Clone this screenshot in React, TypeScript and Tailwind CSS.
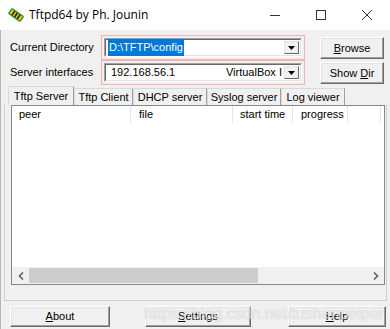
import { ReactNode } from 'react'

const font = { fontFamily: '"Liberation Sans", Arial, sans-serif' }

// classic raised 3D button
const Btn = ({ children, className }: { children: ReactNode; className?: string }) => (
    <div
        className={`flex items-center justify-center border border-t-white border-l-white border-r-[#696969] border-b-[#696969] bg-[#f0f0f0] shadow-[inset_-1px_-1px_0_#a0a0a0,inset_1px_1px_0_#e3e3e3] text-[11px] text-black ${className ?? ''}`}
    >
        {children}
    </div>
)

const DropArrow = () => (
    <div className="flex h-full w-[15px] items-center justify-center border border-t-[#e3e3e3] border-l-[#e3e3e3] border-r-[#696969] border-b-[#696969] bg-[#f0f0f0]">
        <svg width="7" height="4" viewBox="0 0 7 4">
            <path d="M0 0h7L3.5 4z" fill="#000" />
        </svg>
    </div>
)

const Combo = ({ children }: { children: ReactNode }) => (
    <div className="h-[25px] w-[204px] border border-[#f3b3b3] p-[2px]">
        <div className="flex h-full items-center border border-t-[#a0a0a0] border-l-[#a0a0a0] border-r-white border-b-white bg-white">
            <div className="flex h-full flex-1 items-center border border-t-[#696969] border-l-[#696969] border-r-[#e3e3e3] border-b-[#e3e3e3] pl-[1px] pr-[1px] py-[1px]">
                <div className="flex h-full flex-1 items-center pl-[1px] text-[11px]">{children}</div>
                <DropArrow />
            </div>
        </div>
    </div>
)

const TabLabel = ({ label, active, w }: { label: string; active?: boolean; w: string }) => (
    <div
        className={`flex items-center justify-center border border-b-0 border-t-[#d9d9d9] border-l-[#d9d9d9] border-r-[#a0a0a0] bg-[#f0f0f0] text-[11px] ${w} ${
            active ? 'h-[19px]' : 'h-[17px]'
        }`}
    >
        {label}
    </div>
)

const Header = ({ label, w }: { label: string; w: string }) => (
    <div className={`flex h-[17px] items-center border-r border-[#e5e5e5] text-[11px] ${w}`}>{label}</div>
)

export default function App() {
    return (
        <div className="relative flex h-[329px] w-[390px] flex-col overflow-hidden bg-[#f0f0f0] text-black" style={font}>
            {/* title bar */}
            <div className="flex h-[30px] items-center bg-white">
                <svg className="ml-[8px]" width="16" height="14" viewBox="0 0 16 14">
                    <g transform="rotate(35 8 7)">
                        <rect x="1" y="4" width="14" height="6" rx="1" fill="#e8c21a" stroke="#2f9a2f" strokeWidth="1.4" />
                        <rect x="4" y="4.5" width="1.6" height="5" fill="#222" />
                        <rect x="7.2" y="4.5" width="1.6" height="5" fill="#222" />
                        <rect x="10.4" y="4.5" width="1.6" height="5" fill="#222" />
                    </g>
                </svg>
                <span className="ml-[5px] text-[12px]" style={{ fontFamily: '"Open Sans", "Liberation Sans", sans-serif' }}>
                    Tftpd64 by Ph. Jounin
                </span>
                <div className="ml-auto flex h-full items-center">
                    <div className="flex h-full w-[46px] items-center justify-center">
                        <div className="h-px w-[10px] bg-[#333]" />
                    </div>
                    <div className="flex h-full w-[46px] items-center justify-center">
                        <div className="h-[10px] w-[10px] border border-[#333]" />
                    </div>
                    <div className="flex h-full w-[46px] items-center justify-center">
                        <svg width="10" height="10" viewBox="0 0 10 10">
                            <path d="M0 0L10 10M10 0L0 10" stroke="#333" strokeWidth="1" />
                        </svg>
                    </div>
                </div>
            </div>

            {/* body */}
            <div className="flex flex-1 flex-col border-l border-[#b5b5b5] pt-[5px]">
                <div className="flex">
                    <div className="flex w-[100px] flex-col">
                        <div className="flex h-[25px] items-center pl-[9px] text-[11px]">Current Directory</div>
                        <div className="flex h-[25px] items-center pl-[9px] text-[11px]">Server interfaces</div>
                    </div>
                    <div className="flex flex-col">
                        <Combo>
                            <span className="bg-[#0078d7] px-[1px] text-white">D:\TFTP\config</span>
                        </Combo>
                        <Combo>
                            <span className="ml-[3px]">192.168.56.1</span>
                            <span className="ml-auto mr-[2px]">VirtualBox I</span>
                        </Combo>
                    </div>
                    <div className="ml-[15px] flex flex-col pt-[2px]">
                        <Btn className="h-[22px] w-[64px]">
                            <span><u>B</u>rowse</span>
                        </Btn>
                        <Btn className="mt-[3px] h-[22px] w-[64px]">
                            <span>Show <u>D</u>ir</span>
                        </Btn>
                    </div>
                </div>

                {/* tabs */}
                <div className="mt-[1px] flex items-end pl-[7px]">
                    <TabLabel label="Tftp Server" active w="w-[66px]" />
                    <TabLabel label="Tftp Client" w="w-[59px]" />
                    <TabLabel label="DHCP server" w="w-[74px]" />
                    <TabLabel label="Syslog server" w="w-[74px]" />
                    <TabLabel label="Log viewer" w="w-[64px]" />
                </div>

                {/* tab pane */}
                <div className="mx-[3px] flex h-[196px] flex-col border border-t-0 border-[#d0d0d0] pb-[15px] pl-[6px] pr-[1px]">
                    <div className="flex flex-1 flex-col border border-[#828790] bg-white">
                        <div className="flex">
                            <Header label="peer" w="w-[119px] pl-[7px]" />
                            <Header label="file" w="w-[102px] pl-[8px]" />
                            <Header label="start time" w="w-[60px] pl-[7px]" />
                            <Header label="progress" w="w-[55px] pl-[8px]" />
                            <Header label="" w="w-[33px]" />
                        </div>
                        <div className="flex-1" />
                        <div className="flex h-[17px] items-center bg-[#f0f0f0]">
                            <div className="flex h-full w-[17px] items-center justify-center">
                                <svg width="6" height="8" viewBox="0 0 6 8">
                                    <path d="M5 0.5L1.5 4L5 7.5" stroke="#606060" strokeWidth="1.6" fill="none" />
                                </svg>
                            </div>
                            <div className="h-[15px] w-[229px] bg-[#cdcdcd]" />
                            <div className="flex-1" />
                            <div className="flex h-full w-[17px] items-center justify-center">
                                <svg width="6" height="8" viewBox="0 0 6 8">
                                    <path d="M1 0.5L4.5 4L1 7.5" stroke="#606060" strokeWidth="1.6" fill="none" />
                                </svg>
                            </div>
                        </div>
                    </div>
                </div>

                {/* bottom buttons */}
                <div className="mt-[5px] flex pl-[9px]">
                    <Btn className="h-[21px] w-[100px]">
                        <span><u>A</u>bout</span>
                    </Btn>
                    <Btn className="ml-[35px] h-[21px] w-[106px]">
                        <span><u>S</u>ettings</span>
                    </Btn>
                    <Btn className="ml-[37px] h-[21px] w-[98px]">
                        <span><u>H</u>elp</span>
                    </Btn>
                </div>
            </div>

            {/* watermark */}
            <div
                className="pointer-events-none absolute left-[144px] top-[302px] text-[16px] text-white/60"
                style={{ textShadow: '0 0 1px rgba(130,130,130,0.45)' }}
            >
                https://blog.csdn.net/tushanpeipei
            </div>
        </div>
    )
}
